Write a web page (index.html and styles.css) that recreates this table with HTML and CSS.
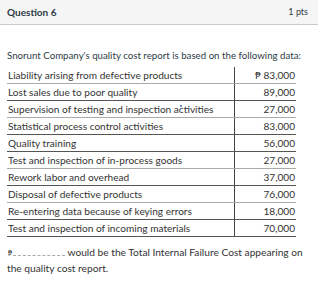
FILE: index.html
```html
<!DOCTYPE html>
<html lang="en">
<head>
    <meta charset="UTF-8">
    <title>Question 6</title>
    <link rel="stylesheet" href="styles.css">
</head>
<body>
<div class="question">
    <div class="header">
        <span class="title">Question 6</span>
        <span class="pts">1 pts</span>
    </div>
    <div class="content">
        <p class="intro">Snorunt Company's quality cost report is based on the following data:</p>
        <table class="data">
            <colgroup><col class="label-col"><col class="num-col"></colgroup>
            <tr class="light"><td>Liability arising from defective products</td><td class="num">₱ 83,000</td></tr>
            <tr class="dark"><td>Lost sales due to poor quality</td><td class="num">89,000</td></tr>
            <tr class="light"><td>Supervision of testing and inspection a<span class="mark">c</span>tivities</td><td class="num">27,000</td></tr>
            <tr class="dark"><td>Statistical process control activities</td><td class="num">83,000</td></tr>
            <tr class="dark"><td>Quality training</td><td class="num">56,000</td></tr>
            <tr class="light"><td>Test and inspection of in-process goods</td><td class="num">27,000</td></tr>
            <tr class="dark"><td>Rework labor and overhead</td><td class="num">37,000</td></tr>
            <tr class="light"><td>Disposal of defective products</td><td class="num">76,000</td></tr>
            <tr class="dark"><td>Re-entering data because of keying errors</td><td class="num">18,000</td></tr>
            <tr class="dark"><td>Test and inspection of incoming materials</td><td class="num">70,000</td></tr>
        </table>
        <p class="answer"><span class="peso">₱</span><span class="blank"></span> would be the Total Internal Failure Cost appearing on<br>the quality cost report.</p>
    </div>
</div>
</body>
</html>
```

FILE: styles.css
```css
body {
    margin: 0;
    font: 9.7px/1.5 Lato, "Open Sans", sans-serif;
    color: #2d3b45;
    background: #fff;
}
p { margin: 0; }

.header {
    height: 24px;
    display: flex;
    align-items: center;
    justify-content: space-between;
    padding: 0 10px 0 7px;
    background: #f5f5f5;
    border-bottom: 1px solid #c7cdd1;
}
.title {
    font-weight: bold;
    font-size: 10px;
}
.pts {
    font-size: 9px;
}

.content {
    padding: 22px 7px 0 7px;
}
.intro {
    line-height: 16px;
    margin-bottom: 4px;
}

.data {
    border-collapse: collapse;
    table-layout: fixed;
    width: 289px;
    font-size: 10.1px;
}
.label-col { width: 227px; }
.num-col { width: 62px; }
.data td {
    height: 16px;
    padding: 0 1px 0 1px;
    line-height: 16px;
    white-space: nowrap;
    color: #333;
}
.data tr.light td { border-bottom: 1px solid #aaa; }
.data tr.dark td { border-bottom: 1px solid #555; }
.data td.num {
    text-align: right;
    border-left: 1px solid #444;
}
.mark {
    position: relative;
}
.mark::before {
    content: "";
    position: absolute;
    left: 1px;
    top: 2px;
    width: 2px;
    height: 2px;
    border-radius: 50%;
    background: #3b6fd8;
}

.answer {
    margin-top: 7px;
    line-height: 16px;
    font-size: 10.2px;
    color: #333;
}
.peso {
    display: inline-block;
    font-size: 7px;
    line-height: 10px;
    margin-left: 1px;
}
.blank {
    display: inline-block;
    width: 52px;
    height: 1px;
    margin-left: 1px;
    border-bottom: 1px dashed #aaa;
    vertical-align: baseline;
}
```
